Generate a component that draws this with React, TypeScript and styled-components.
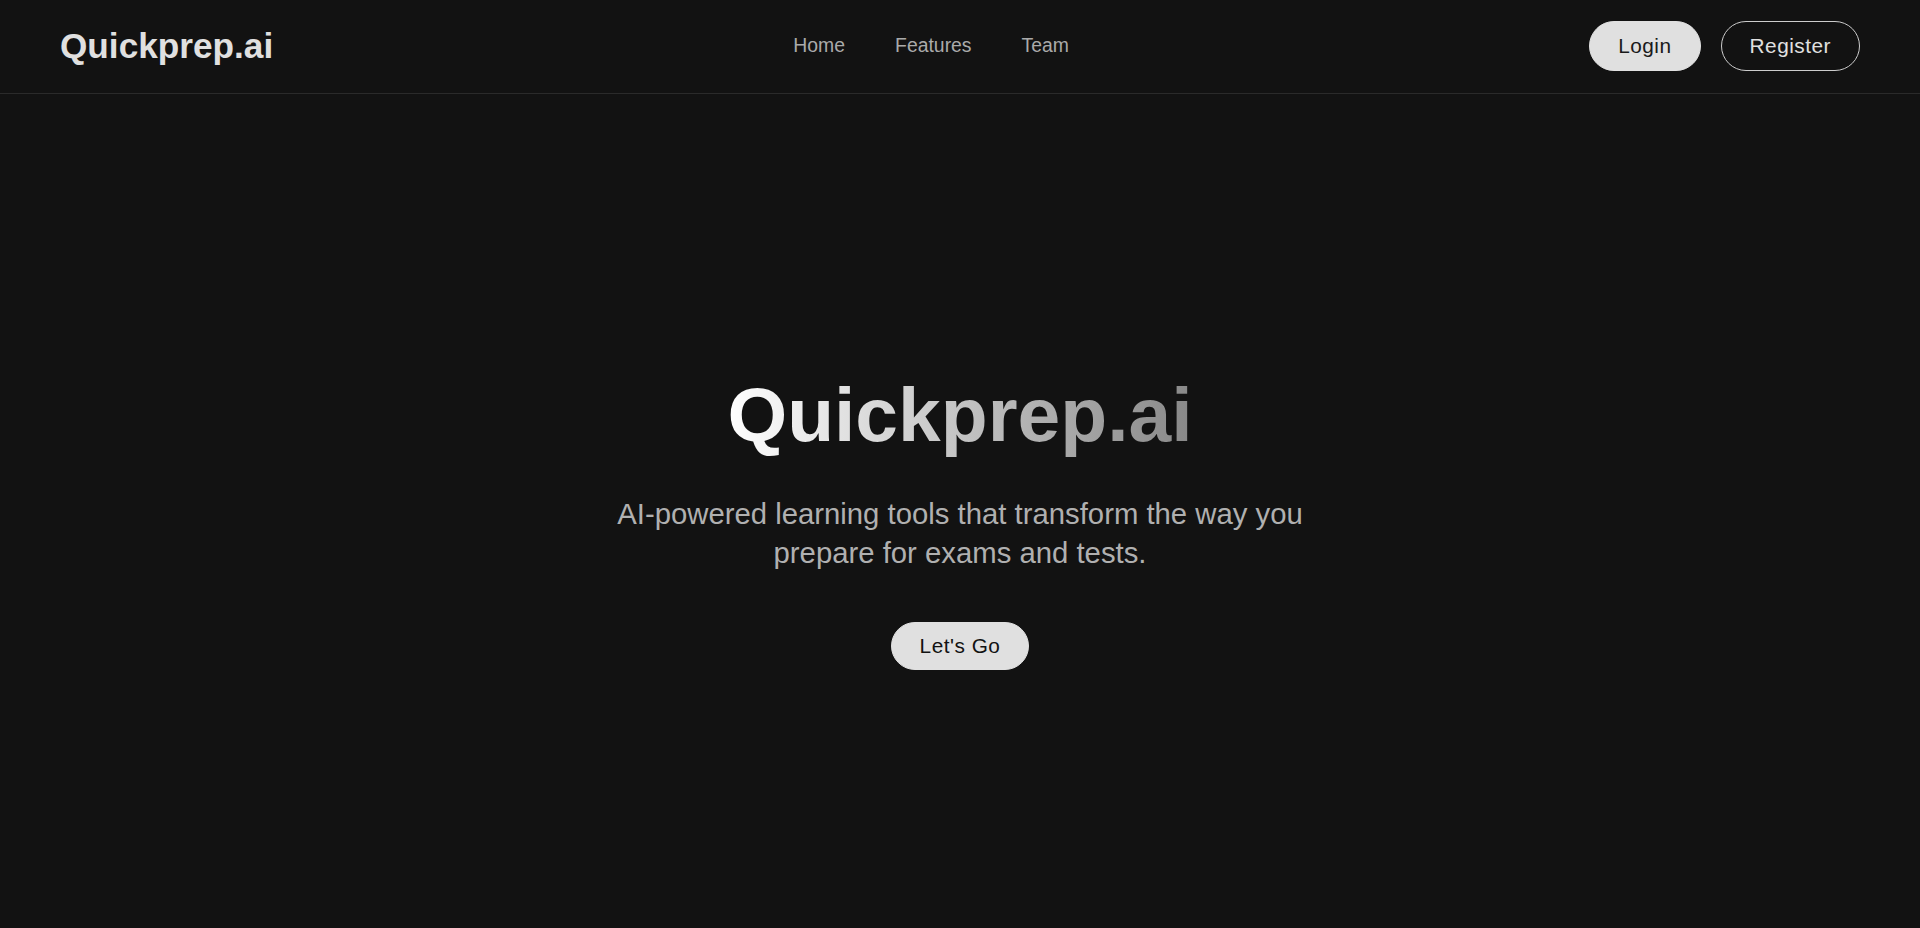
import React from "react";
import styled, { createGlobalStyle } from "styled-components";

const GlobalStyle = createGlobalStyle`
  html, body {
    margin: 0;
    padding: 0;
    background: #121212;
  }
  body {
    font-family: "Liberation Sans", Arial, sans-serif;
    color: #e0e0e0;
  }
  * { box-sizing: border-box; }
`;

const Page = styled.div`
  min-height: 928px;
  background: #121212;
  display: flex;
  flex-direction: column;
`;

const Header = styled.header`
  display: flex;
  align-items: center;
  justify-content: space-between;
  height: 94px;
  padding: 0 60px 2px;
  border-bottom: 1px solid #2a2a2a;
`;

const Logo = styled.div`
  font-size: 35.2px;
  font-weight: 700;
  color: #e0e0e0;
`;

const Nav = styled.nav`
  display: flex;
  gap: 50px;
`;

const NavLink = styled.a`
  font-size: 19.4px;
  color: #aaaaaa;
  text-decoration: none;
  cursor: pointer;
`;

const Actions = styled.div`
  display: flex;
  gap: 20px;
`;

const PillButton = styled.button<{ $variant: "solid" | "outline" }>`
  font-family: "Liberation Sans", Arial, sans-serif;
  font-size: 20.8px;
  letter-spacing: 0.5px;
  line-height: 24px;
  padding: 12px 28px;
  border-radius: 999px;
  cursor: pointer;
  border: 1px solid ${(p) => (p.$variant === "solid" ? "#e0e0e0" : "#cccccc")};
  background: ${(p) => (p.$variant === "solid" ? "#e0e0e0" : "transparent")};
  color: ${(p) => (p.$variant === "solid" ? "#1a1a1a" : "#e0e0e0")};
`;

const Hero = styled.main`
  flex: 1;
  display: flex;
  flex-direction: column;
  align-items: center;
  justify-content: center;
  text-align: center;
  padding-top: 17px;
`;

const Title = styled.h1`
  margin: 0;
  font-size: 76.8px;
  font-weight: 700;
  line-height: 88px;
  background: linear-gradient(90deg, #ffffff 0%, #888888 100%);
  -webkit-background-clip: text;
  background-clip: text;
  color: transparent;
`;

const Subtitle = styled.p`
  margin: 36px 0 0;
  max-width: 710px;
  font-size: 29.3px;
  line-height: 39px;
  color: #b0b0b0;
`;

const CtaButton = styled(PillButton)`
  margin-top: 50px;
  padding: 11px 28px;
  color: #121212;
`;

export default function App() {
  return (
    <>
      <GlobalStyle />
      <Page>
        <Header>
          <Logo>Quickprep.ai</Logo>
          <Nav>
            <NavLink>Home</NavLink>
            <NavLink>Features</NavLink>
            <NavLink>Team</NavLink>
          </Nav>
          <Actions>
            <PillButton $variant="solid">Login</PillButton>
            <PillButton $variant="outline">Register</PillButton>
          </Actions>
        </Header>
        <Hero>
          <Title>Quickprep.ai</Title>
          <Subtitle>
            AI-powered learning tools that transform the way you prepare for exams and tests.
          </Subtitle>
          <CtaButton $variant="solid">Let's Go</CtaButton>
        </Hero>
      </Page>
    </>
  );
}
